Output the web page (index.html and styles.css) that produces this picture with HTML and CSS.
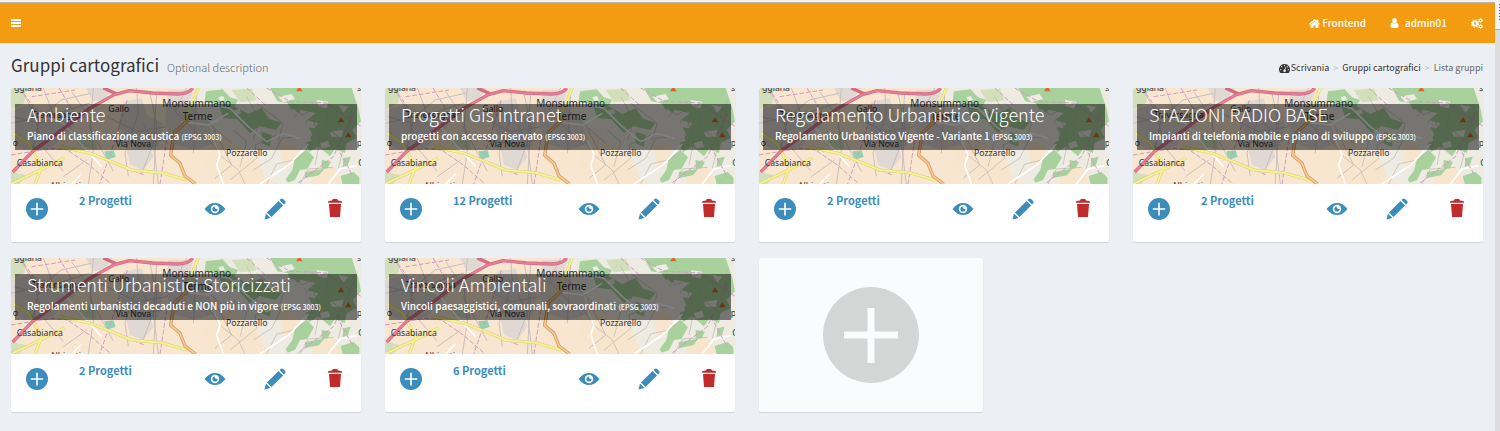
FILE: index.html
```html
<!DOCTYPE html>
<html lang="it">
<head>
<meta charset="utf-8">
<title>Gruppi cartografici</title>
<link rel="stylesheet" href="styles.css">
</head>
<body>
<svg class="sprite" aria-hidden="true">
  <symbol id="plus" viewBox="0 0 96 96"><path fill-rule="evenodd" d="M48 0a48 48 0 1 0 0 96a48 48 0 1 0 0-96zM44.500 21h7v23.500H75v7H51.500V76h-7V51.500H21v-7h23.500z"/></symbol>
  <symbol id="eye" viewBox="0 0 22 22"><path fill-rule="evenodd" d="M.5 11C4 6.500 7.500 4.900 11 4.900S18 6.500 21.500 11C18 15.500 14.500 17.100 11 17.100S4 15.500 .5 11zM11 6.800a4.200 4.200 0 1 0 0 8.400a4.200 4.200 0 1 0 0-8.400zM11 8.400c-.8 1.300.2 2.700 2.600 2.600a2.600 2.600 0 1 1-2.600-2.600z"/></symbol>
  <symbol id="pencil" viewBox="0 0 22 22"><path d="M.5 21.500l1.500-6 4.500 4.500zM2.900 14.500L14.600 2.900l4.500 4.500L7.500 19.100zM15.500 2l1.100-1.100c.7-.7 1.700-.7 2.400 0L21.100 3c.7.7.7 1.700 0 2.400L20 6.500z"/></symbol>
  <symbol id="trash" viewBox="0 0 16 20"><path d="M1 4.700V3.500c1.200-.5 2.800-.8 4.100-.9L5.800 1h4.400l.7 1.600c1.300.1 2.900.4 4.100.9v1.200zM2 6h12l-1 13H3z"/></symbol>
  <symbol id="home" viewBox="0 0 22 18"><path d="M11 0L0 9.500l1.800 2L11 3.800l9.200 7.700L22 9.500l-3.500-3V1.500h-3.500v2zM11 5.200L3.200 11.500V18H9v-5h4v5h5.800v-6.500z"/></symbol>
  <symbol id="user" viewBox="0 0 16 20"><path d="M8 0a4.700 5 0 1 0 0 10a4.700 5 0 1 0 0-10zM4 9C1 9.500 0 13 0 16c0 2.500 1.200 4 3.500 4h9c2.300 0 3.500-1.500 3.500-4c0-3-1-6.500-4-7c-2 2.500-6 2.500-8 0z"/></symbol>
  <symbol id="cogs" viewBox="0 0 24 22"><g fill="none" stroke="currentColor"><circle cx="8" cy="11" r="4.300" stroke-width="3.800"/><circle cx="8" cy="11" r="7" stroke-width="2.400" stroke-dasharray="2.750 2.750"/><circle cx="19" cy="5" r="2.500" stroke-width="2.300"/><circle cx="19" cy="5" r="4.200" stroke-width="1.500" stroke-dasharray="2.200 2.200"/><circle cx="19" cy="17" r="2.500" stroke-width="2.300"/><circle cx="19" cy="17" r="4.200" stroke-width="1.500" stroke-dasharray="2.200 2.200"/></g></symbol>
  <symbol id="gauge" viewBox="0 0 22 18"><path fill-rule="evenodd" d="M11 0A11 11 0 0 0 1.900 17.200L3 18h16l1.100-.8A11 11 0 0 0 11 0zM11 2a1.300 1.300 0 1 1 0 2.600a1.300 1.300 0 1 1 0-2.600zM5.500 4.200a1.300 1.300 0 1 1 0 2.600a1.300 1.300 0 1 1 0-2.600zM16.500 4.200a1.300 1.300 0 1 1 0 2.600a1.300 1.300 0 1 1 0-2.600zM3.500 10a1.300 1.300 0 1 1 0 2.600a1.300 1.300 0 1 1 0-2.600zM18.500 10a1.300 1.300 0 1 1 0 2.600a1.300 1.300 0 1 1 0-2.600zM12.500 6l1.300.4-1.200 5a2.500 2.500 0 1 1-1.500-.4z"/></symbol>
  <symbol id="map" viewBox="33 24 1050 288" preserveAspectRatio="xMidYMid slice">
    <rect x="33" y="24" width="1050" height="288" fill="#f9e6d0"/>
    <path fill="#edebe2" d="M585 24h498v288H835l-40-20-20-60-85-55-70-40-40-60z"/>
    <path fill="#f8e5ce" d="M640 190l60 15 70 45 40 62H670l-60-60zM835 180l55 15 10 50-50 20zM940 270l60-10 30 52H935z"/>
    <path fill="#e0d8d2" d="M33 90l55-15 75 30 45-5 15 35-65 65-85 10-40-30zM258 24l80 0-25 35-35 5zM370 65l55-10 15 50 50 25-15 70-60 5-40-40-20-30zM505 30l75 0-15 50 60 50 20 60-60 20-70-20-20-70zM380 210l70-10 10 30-30 40-40-15z"/>
    <path fill="#d3dfba" d="M33 24h45l-5 45-40 20zM150 110l25-5 10 25-28 8zM215 160l70 10 5 38-50-10zM695 30l60-4 15 35-50 6zM33 275l45 10-20 27H33z"/>
    <path fill="#a8d19d" d="M618 34l50-6 22 24 25 8-12 18 42 24 40-18 22 32 38 12-18 22-50-12-27 22-38-42-42-4-12-34-44-18zM810 24h245l20 60 8 40-25 25 12 25-30 15-5 30-30-12-15 22-35-30-28 18-10-28 20-25-20-40 30-25-45-10-15 20-25-40-30-5zM785 155l30 10-5 35-25-10zM885 235l35-25 22 22-20 35-22 3-15 30-22 8-6-10 20-28zM965 240l28 5-10 20-18 2zM915 276l58-10-16 20-42 8zM1030 235l22-5-8 24-16 8zM1022 288l38-12 18 16v20h-50z"/>
    <path fill="#edebe2" d="M835 50l40-8 10 15-35 10zM950 60l35 5-5 20-25-5zM920 120l35 10-10 15-25-5zM990 155l40-5-5 20-30 0zM1015 75l30 5-15 18zM860 95l22-8 14 14-22 8zM900 170l30-6 4 18-22 8zM960 190l24-8 6 18-24 6zM700 92l18-6 6 14-18 6zM655 52l14-4 6 12-14 4z"/>
    <path fill="#8fd3b0" d="M313 214l28-3 6 20-28 8zM95 196l14 4-5 14-14-4z"/>
    <g fill="none" stroke-linejoin="round">
      <path stroke="#c8bfc0" stroke-width="3" d="M33 130l90-20 60-50 90-20M60 24l40 70 30 110 60 70M130 24l30 80 110-35M215 35l55 80 10 100-15 97M280 24l-10 120 70 130M410 24l5 75-40 120 10 70M470 40l-10 150 15 122M450 40l20 95-10 177M430 130l30 60-35 90M300 100l110 55 90-15M330 180l90 10 100-15M190 290l70-50M40 110l80 20 60-25M545 60l60 50 90 80M560 24l-35 70 100 100M590 40l-10 180M640 145l55 110-50 40"/>
      <path stroke="#bab6b1" stroke-width="2" d="M620 170l45 60 50 40 20 42M700 150l40 35-20 75M760 270l55-35 30-60 45-5M690 300l80-65-5-40 65-30M800 312l30-60 65-15 40-45M870 60l35 45 75-35 50 40M940 120l20 60-15 75M990 60l-15 80 60 45-20 80M740 50l40 70-20 60M770 70l80 60-15 50M1060 60l-15 95M900 312l25-45 75-5"/>
      <path stroke="#fff" stroke-width="5" d="M640 180l20 45-10 30 20 57M625 70l65 15 55 55 55 45 50-25 50 15M780 312l90-60 55-60M215 312l30-30M100 100l90 30 60 70 55 60M545 125l80 10 60-35M985 312l35-45 50-10"/>
      <path stroke="#cf9dc0" stroke-width="3" stroke-dasharray="14 6" d="M60 24l60 85-20 90M177 24l60 100M382 60l-38 125-45 127M500 180l-20 132M190 202l78 53 65 57M33 225l120-20 110 10 170 70M95 50l130-20M800 24l70 40 110 5 103 70M1060 100l-60 130-110 82M1010 200l50 90M740 24l55 50"/>
      <path stroke="#d8cf86" stroke-width="9" d="M40 160l45 30 40 70-20 52M33 312l85-40 75-38M180 200l90 20 65 25 60 25 90 8 75 22M595 24l-25 60-20 45"/>
      <path stroke="#f6f28e" stroke-width="6" d="M40 160l45 30 40 70-20 52M33 312l85-40 75-38M180 200l90 20 65 25 60 25 90 8 75 22M595 24l-25 60-20 45"/>
      <path stroke="#d39a66" stroke-width="10" d="M565 120l-42 38-11 68 28 24 15 38 32 24"/>
      <path stroke="#f8ca90" stroke-width="5" d="M565 120l-42 38-11 68 28 24 15 38 32 24"/>
      <path stroke="#d56a85" stroke-width="10" d="M38 276l60-62 95-70 75-58 75-42 45-12 70 7 75 3q32 0 45-18M310 24l40 18"/>
      <path stroke="#e27f95" stroke-width="6" d="M38 276l60-62 95-70 75-58 75-42 45-12 70 7 75 3q32 0 45-18"/>
    </g>
    <path fill="#d5672f" d="M898 19l10 15h-20zM1023 112l10 15h-20zM1045 157l10 15h-20z"/>
    <g class="map-labels">
      <text x="42" y="32">ggiana</text><text x="95" y="113">Traversagna</text><text x="325" y="95">Gallo</text>
      <text class="town" x="487" y="80">Monsummano</text><text class="town" x="548" y="120">Terme</text>
      <text x="347" y="200">Via Nova</text><text x="678" y="227">Pozzarello</text><text x="50" y="257">Casabianca</text><text x="150" y="327">Albinatico</text>
      <text x="38" y="199">o</text><text x="1071" y="33">s</text><text x="1070" y="199">p</text><text x="1075" y="258">C</text>
    </g>
  </symbol>
</svg>
<div class="page">
  <div class="app">
    <header class="navbar">
      <button class="menu" aria-label="Menu"><span></span><span></span><span></span></button>
      <nav class="nav">
        <a href="#"><svg class="i-home"><use href="#home"/></svg>Frontend</a>
        <a class="account" href="#"><svg class="i-user"><use href="#user"/></svg>admin01</a>
        <a href="#" aria-label="Impostazioni"><svg class="i-cogs"><use href="#cogs"/></svg></a>
      </nav>
    </header>
    <div class="heading">
      <h1>Gruppi cartografici <small>Optional description</small></h1>
      <nav class="crumbs"><a href="#"><svg class="i-gauge"><use href="#gauge"/></svg>Scrivania</a><i>&gt;</i><a href="#">Gruppi cartografici</a><i>&gt;</i><span>Lista gruppi</span></nav>
    </div>
    <main class="groups">
      <article class="card"><div class="cover"><svg class="map"><use href="#map"/></svg><div class="caption"><h2>Ambiente</h2><p>Piano di classificazione acustica <small>(EPSG 3003)</small></p></div></div>
        <div class="actions"><button aria-label="Aggiungi"><svg><use href="#plus"/></svg></button><a class="count" href="#">2 Progetti</a><button aria-label="Vedi"><svg><use href="#eye"/></svg></button><button aria-label="Modifica"><svg><use href="#pencil"/></svg></button><button class="delete" aria-label="Elimina"><svg><use href="#trash"/></svg></button></div></article>
      <article class="card"><div class="cover"><svg class="map"><use href="#map"/></svg><div class="caption"><h2>Progetti Gis intranet</h2><p>progetti con accesso riservato <small>(EPSG 3003)</small></p></div></div>
        <div class="actions"><button aria-label="Aggiungi"><svg><use href="#plus"/></svg></button><a class="count" href="#">12 Progetti</a><button aria-label="Vedi"><svg><use href="#eye"/></svg></button><button aria-label="Modifica"><svg><use href="#pencil"/></svg></button><button class="delete" aria-label="Elimina"><svg><use href="#trash"/></svg></button></div></article>
      <article class="card"><div class="cover"><svg class="map"><use href="#map"/></svg><div class="caption"><h2>Regolamento Urbanistico Vigente</h2><p>Regolamento Urbanistico Vigente - Variante 1 <small>(EPSG 3003)</small></p></div></div>
        <div class="actions"><button aria-label="Aggiungi"><svg><use href="#plus"/></svg></button><a class="count" href="#">2 Progetti</a><button aria-label="Vedi"><svg><use href="#eye"/></svg></button><button aria-label="Modifica"><svg><use href="#pencil"/></svg></button><button class="delete" aria-label="Elimina"><svg><use href="#trash"/></svg></button></div></article>
      <article class="card"><div class="cover"><svg class="map"><use href="#map"/></svg><div class="caption"><h2>STAZIONI RADIO BASE</h2><p>Impianti di telefonia mobile e piano di sviluppo <small>(EPSG 3003)</small></p></div></div>
        <div class="actions"><button aria-label="Aggiungi"><svg><use href="#plus"/></svg></button><a class="count" href="#">2 Progetti</a><button aria-label="Vedi"><svg><use href="#eye"/></svg></button><button aria-label="Modifica"><svg><use href="#pencil"/></svg></button><button class="delete" aria-label="Elimina"><svg><use href="#trash"/></svg></button></div></article>
      <article class="card"><div class="cover"><svg class="map"><use href="#map"/></svg><div class="caption"><h2>Strumenti Urbanistici Storicizzati</h2><p>Regolamenti urbanistici decaduti e NON più in vigore <small>(EPSG 3003)</small></p></div></div>
        <div class="actions"><button aria-label="Aggiungi"><svg><use href="#plus"/></svg></button><a class="count" href="#">2 Progetti</a><button aria-label="Vedi"><svg><use href="#eye"/></svg></button><button aria-label="Modifica"><svg><use href="#pencil"/></svg></button><button class="delete" aria-label="Elimina"><svg><use href="#trash"/></svg></button></div></article>
      <article class="card"><div class="cover"><svg class="map"><use href="#map"/></svg><div class="caption"><h2>Vincoli Ambientali</h2><p>Vincoli paesaggistici, comunali, sovraordinati <small>(EPSG 3003)</small></p></div></div>
        <div class="actions"><button aria-label="Aggiungi"><svg><use href="#plus"/></svg></button><a class="count" href="#">6 Progetti</a><button aria-label="Vedi"><svg><use href="#eye"/></svg></button><button aria-label="Modifica"><svg><use href="#pencil"/></svg></button><button class="delete" aria-label="Elimina"><svg><use href="#trash"/></svg></button></div></article>
      <button class="card new-group" aria-label="Nuovo gruppo"><svg><use href="#plus"/></svg></button>
    </main>
  </div>
  <div class="rail"><div class="grip"></div></div>
</div>
</body>
</html>
```
FILE: styles.css
```css
* { box-sizing: border-box; }
body { margin: 0; background: #ecf0f5; color: #333; font: 10px/16px "Noto Sans CJK SC", "Open Sans", sans-serif; }
h1, h2, p { margin: 0; font-weight: 400; }
a { color: inherit; text-decoration: none; }
button { padding: 0; border: 0; background: none; color: inherit; font: inherit; cursor: pointer; }
svg { display: block; fill: currentColor; }
.sprite { position: absolute; width: 0; height: 0; }
.page { display: flex; min-height: 100vh; border-top: 2px solid #f1f2f5; }
.app { flex: 1; min-width: 0; }
.rail { width: 5px; background: #dcdddc; }
.grip { height: 28px; border-bottom: 1px solid #aaa; background: repeating-linear-gradient(#f5f5f5 0 2px, #666 2px 3px) right top / 1px 19px no-repeat #f5f5f5; }

.navbar { display: flex; justify-content: space-between; align-items: center; height: 41px; padding: 0 12px 0 11px; border-top: 1px solid #c1b5a9; background: #f39c12; color: #fff; }
.menu { display: grid; gap: 1px; width: 10px; }
.menu span { height: 2px; background: #fff; }
.nav { display: flex; gap: 24px; font-weight: 500; }
.nav a { display: flex; align-items: center; gap: 2px; }
.nav .account { gap: 6px; }
.i-home { width: 11px; height: 9px; }
.i-user { width: 9px; height: 10px; }
.i-cogs { width: 12px; height: 11px; }

.heading { display: flex; justify-content: space-between; align-items: center; padding: 9px 12px 8px 11px; }
h1 { font-size: 17px; line-height: 26px; }
h1 small { margin-left: 4px; color: #666; font-size: 11px; font-weight: 300; }
.crumbs { display: flex; font-size: 9px; padding-top: 4px; }
.crumbs a { display: flex; align-items: center; gap: 1px; color: #333; }
.crumbs i { margin: 0 4px; color: #bbb; font-style: normal; }
.crumbs span { color: #666; }
.i-gauge { width: 11px; height: 9px; }

.groups { display: grid; grid-template-columns: repeat(4, minmax(0, 1fr)); gap: 16px 24px; padding: 0 12px 18px 11px; }
.card { overflow: hidden; border-radius: 2px; background: #fff; box-shadow: 0 1px 1px rgba(0, 0, 0, .12); }
.cover { display: grid; height: 96px; }
.cover > * { grid-area: 1 / 1; }
.map { width: 100%; height: 96px; }
.map-labels { fill: #333; font: 26px "Noto Sans", sans-serif; }
.map-labels .town { font-size: 30px; }
.caption { z-index: 1; align-self: start; height: 46px; margin: 16px 4px 0; padding: 0 12px; background: rgba(0, 0, 0, .5); color: #fff; white-space: nowrap; }
.caption h2 { font-size: 18px; font-weight: 300; line-height: 20px; }
.caption p { padding-top: 4px; font-size: 10px; font-weight: 500; line-height: 16px; }
.caption small { font-size: 7px; }
.actions { display: flex; align-items: flex-start; gap: 38px; height: 58px; padding: 14px 15px 0; color: #3c8dbc; }
.actions svg { width: 22px; height: 22px; }
.actions .count { flex: 1; margin-left: -7px; margin-top: -6px; font-size: 11px; font-weight: 700; }
.actions .delete { color: #c12b2b; }
.actions .delete svg { height: 20px; }
.new-group { display: grid; place-items: center; width: 64%; background: #fafbfd; color: #d4d6d5; }
.new-group svg { width: 96px; height: 96px; }
```
